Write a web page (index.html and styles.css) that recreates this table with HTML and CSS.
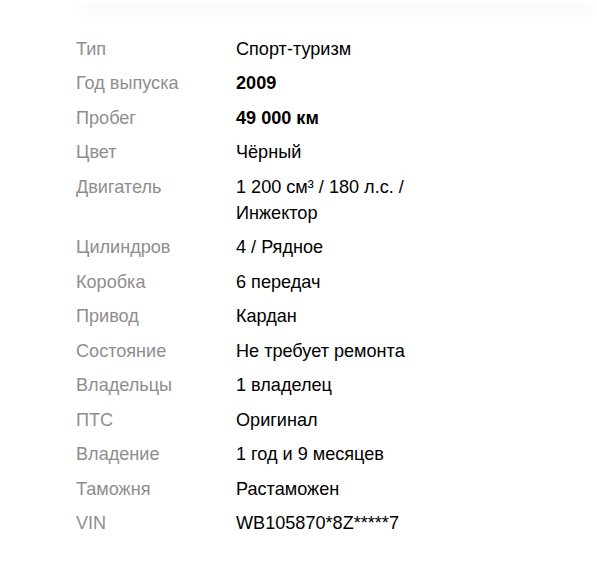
FILE: index.html
```html
<!DOCTYPE html>
<html lang="ru">
<head>
<meta charset="utf-8">
<link rel="stylesheet" href="styles.css">
</head>
<body>
<div class="card"></div>
<dl class="specs">
  <div class="row"><dt>Тип</dt><dd>Спорт-туризм</dd></div>
  <div class="row"><dt>Год выпуска</dt><dd class="bold">2009</dd></div>
  <div class="row"><dt>Пробег</dt><dd class="bold">49 000 км</dd></div>
  <div class="row"><dt>Цвет</dt><dd>Чёрный</dd></div>
  <div class="row"><dt>Двигатель</dt><dd>1 200 см³ / 180 л.с. /<br>Инжектор</dd></div>
  <div class="row"><dt>Цилиндров</dt><dd>4 / Рядное</dd></div>
  <div class="row"><dt>Коробка</dt><dd>6 передач</dd></div>
  <div class="row"><dt>Привод</dt><dd>Кардан</dd></div>
  <div class="row"><dt>Состояние</dt><dd>Не требует ремонта</dd></div>
  <div class="row"><dt>Владельцы</dt><dd>1 владелец</dd></div>
  <div class="row"><dt>ПТС</dt><dd>Оригинал</dd></div>
  <div class="row"><dt>Владение</dt><dd>1 год и 9 месяцев</dd></div>
  <div class="row"><dt>Таможня</dt><dd>Растаможен</dd></div>
  <div class="row"><dt>VIN</dt><dd>WB105870*8Z*****7</dd></div>
</dl>
</body>
</html>
```
FILE: styles.css
```css
html, body {
  margin: 0;
  padding: 0;
  background: #fff;
}
body {
  font-family: "Liberation Sans", Arial, sans-serif;
  font-size: 18.1px;
  color: #000;
  overflow: hidden;
}
.card {
  height: 3px;
  margin-left: 78px;
  background: #fff;
  box-shadow: 0 4px 16px rgba(0, 0, 0, 0.12);
  border-bottom-left-radius: 10px;
}
.specs {
  margin: 32.5px 0 0 76px;
  padding: 0;
}
.row {
  display: flex;
  line-height: 26px;
  margin-bottom: 8.5px;
}
dt {
  width: 160px;
  flex: none;
  color: #8e8e8e;
}
dd {
  margin: 0;
  width: 220px;
}
.bold {
  font-weight: bold;
}
```
